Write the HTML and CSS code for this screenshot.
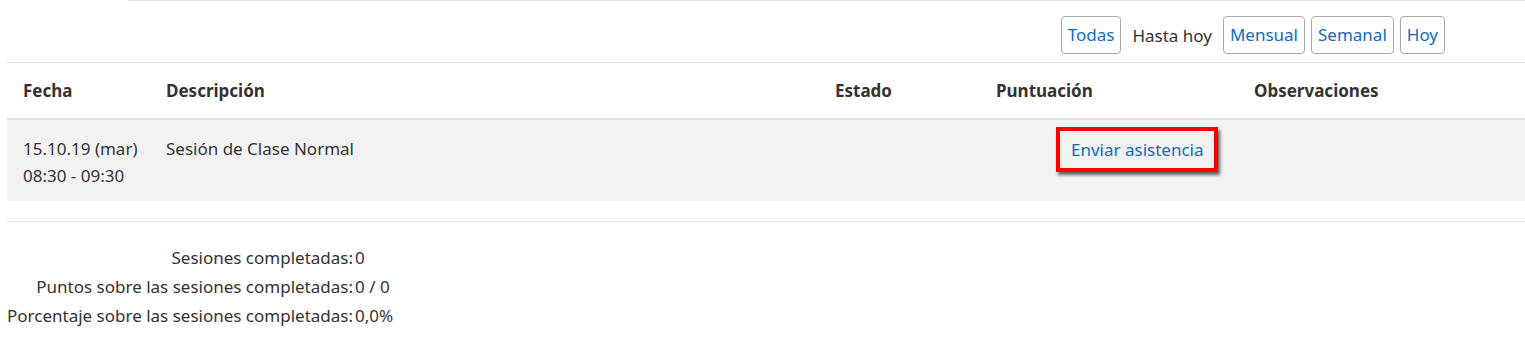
FILE: index.html
```html
<!DOCTYPE html>
<html lang="es">
<head>
<meta charset="utf-8">
<link rel="stylesheet" href="styles.css">
</head>
<body>
<div class="topline"></div>
<div class="page">
  <div class="filters">
    <span class="btn">Todas</span>
    <span class="current">Hasta hoy</span>
    <span class="btn">Mensual</span>
    <span class="btn">Semanal</span>
    <span class="btn">Hoy</span>
  </div>
  <table class="sessions">
    <colgroup>
      <col class="w-fecha">
      <col class="w-desc">
      <col class="w-estado">
      <col class="w-punt">
      <col class="w-obs">
    </colgroup>
    <thead>
      <tr>
        <th>Fecha</th>
        <th>Descripción</th>
        <th>Estado</th>
        <th>Puntuación</th>
        <th>Observaciones</th>
      </tr>
    </thead>
    <tbody>
      <tr>
        <td>15.10.19 (mar)<br>08:30 - 09:30</td>
        <td>Sesión de Clase Normal</td>
        <td></td>
        <td class="c-punt"><span class="highlight"><a class="link">Enviar asistencia</a></span></td>
        <td></td>
      </tr>
    </tbody>
  </table>
  <div class="sep"></div>
  <table class="summary">
    <tr><td class="lbl">Sesiones completadas:</td><td class="val">0</td></tr>
    <tr><td class="lbl">Puntos sobre las sesiones completadas:</td><td class="val">0 / 0</td></tr>
    <tr><td class="lbl">Porcentaje sobre las sesiones completadas:</td><td class="val">0,0%</td></tr>
  </table>
</div>
</body>
</html>
```
FILE: styles.css
```css
html, body {
  margin: 0;
  padding: 0;
  background: #fff;
}
body {
  font-family: "Noto Sans", "Open Sans", sans-serif;
  font-size: 17px;
  color: #333;
}
.topline {
  margin-left: 128px;
  height: 1px;
  background: #dee2e6;
}
.page {
  padding-left: 7px;
}
.filters {
  display: flex;
  justify-content: flex-end;
  align-items: center;
  gap: 6px;
  padding: 15px 80px 8px 0;
  border-bottom: 1px solid #dee2e6;
}
.btn {
  display: inline-block;
  box-sizing: border-box;
  height: 38px;
  line-height: 36px;
  padding: 0 6px;
  border: 1px solid #a9a9a9;
  border-radius: 4px;
  color: #0f6cbf;
}
.current {
  padding: 0 5px;
}
.sessions {
  width: 100%;
  border-collapse: collapse;
  table-layout: fixed;
}
.w-fecha { width: 143px; }
.w-desc { width: 669px; }
.w-estado { width: 161px; }
.w-punt { width: 258px; }
.sessions th {
  text-align: left;
  font-weight: bold;
  height: 55px;
  padding: 0 0 0 16px;
  border-bottom: 2px solid #dee2e6;
}
.sessions td {
  background: #f2f2f2;
  vertical-align: top;
  padding: 15px 0 12px 16px;
  line-height: 27px;
}
.sessions td.c-punt {
  padding-left: 76px;
}
.highlight {
  display: inline-block;
  vertical-align: top;
  margin-top: -8px;
  padding: 5px 11px;
  border: 4px solid #ff0000;
  box-shadow: 2px 3px 3px rgba(0, 0, 0, 0.6);
  white-space: nowrap;
}
.link {
  color: #0f6cbf;
}
.sep {
  margin-top: 20px;
  height: 1px;
  background: #dee2e6;
}
.summary {
  border-collapse: collapse;
  margin-top: 21px;
  margin-left: -7px;
}
.summary td {
  padding: 0;
  line-height: 29px;
  white-space: nowrap;
}
.summary .lbl {
  text-align: right;
  width: 353px;
}
.summary .val {
  padding-left: 2px;
}
```
